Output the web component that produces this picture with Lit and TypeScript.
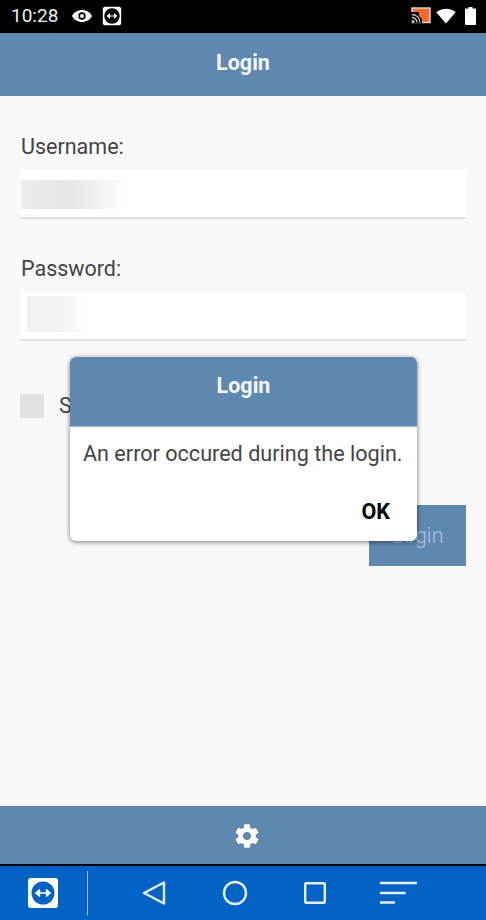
import { LitElement, html, css, svg } from 'lit';
import { customElement } from 'lit/decorators.js';

const tvMark = (bg: string, fg: string) => svg`
  <circle cx="12" cy="12" r="9.2" fill=${bg}></circle>
  <path d="M6.2 12h11.6M6.2 12l3-2.6v5.2zM17.8 12l-3-2.6v5.2z" fill=${fg} stroke=${fg} stroke-width="1.1" stroke-linejoin="round"></path>
`;

@customElement('app-root')
export class AppRoot extends LitElement {
  static styles = css`
    :host {
      display: block;
      width: 486px;
      height: 920px;
      overflow: hidden;
      font-family: Roboto, 'Liberation Sans', sans-serif;
      color: #444;
    }

    .screen {
      position: relative;
      display: flex;
      flex-direction: column;
      height: 920px;
      background: #f9f9f9;
    }

    .status {
      flex: 0 0 33px;
      display: flex;
      align-items: center;
      justify-content: space-between;
      box-sizing: border-box;
      padding: 0 10px 2px 11px;
      background: #000;
      color: #eee;
      font-size: 19px;
    }
    .status-left, .status-right { display: flex; align-items: center; }
    .status-left .time { margin-right: 13px; }
    .status-left .eye { margin-right: 9px; }
    .status-right .wifi { margin: 0 9px 0 5px; }
    .status svg { display: block; }

    .bar {
      display: flex;
      align-items: center;
      justify-content: center;
      background: #5f88b1;
      color: #f4f6f9;
      font-size: 21.5px;
      font-weight: 700;
    }
    .top { flex: 0 0 63px; padding-bottom: 4px; box-sizing: border-box; }

    .form {
      flex: 1;
      display: flex;
      flex-direction: column;
      padding: 37px 20px 0;
    }
    label {
      padding-left: 1px;
      font-size: 21.5px;
      line-height: 28px;
      color: #444;
    }
    .field {
      box-sizing: border-box;
      height: 49px;
      margin: 9px 0 36px;
      background: #fff;
      border-bottom: 2px solid #e2e2e2;
    }
    .blur-user {
      width: 107px;
      height: 29px;
      margin: 10px 0 0 1px;
      background: linear-gradient(90deg, #ececec 0%, #e6e6e6 45%, #ffffff 100%);
    }
    .blur-pass {
      width: 60px;
      height: 36px;
      margin: 4px 0 0 7px;
      background: linear-gradient(90deg, #f1f1f1 0%, #f4f4f4 60%, #ffffff 100%);
    }
    .remember {
      display: flex;
      align-items: center;
      gap: 15px;
      margin-top: 17px;
      font-size: 21.5px;
      line-height: 24px;
    }
    .box {
      width: 24px;
      height: 24px;
      background: #e2e2e2;
    }
    .submit {
      align-self: flex-end;
      box-sizing: border-box;
      width: 97px;
      height: 61px;
      margin-top: 87px;
      display: flex;
      align-items: center;
      justify-content: center;
      background: #5f88b1;
      color: #a9c0d8;
      font-size: 21.5px;
      font-weight: 300;
    }

    .dialog {
      position: absolute;
      left: 70px;
      top: 357px;
      width: 347px;
      height: 184px;
      background: #fff;
      border-radius: 6px;
      box-shadow: 0 1px 5px rgba(0, 0, 0, 0.55);
      overflow: hidden;
      display: flex;
      flex-direction: column;
    }
    .dialog .head {
      flex: 0 0 70px;
      box-sizing: border-box;
      padding-bottom: 12px;
      border-bottom: 1px solid #9db6d0;
    }
    .dialog p {
      margin: 14px 0 0 13px;
      font-size: 21.6px;
      line-height: 26px;
      color: #444;
      white-space: nowrap;
    }
    .dialog .ok {
      align-self: flex-end;
      margin: 32px 27px 0 0;
      font-size: 21.5px;
      line-height: 26px;
      font-weight: 700;
      color: #000;
    }

    .bottom { flex: 0 0 58px; padding: 2px 0 0 8px; box-sizing: border-box; }
    .rule { flex: 0 0 2px; background: #000; }

    .nav {
      flex: 0 0 54px;
      display: flex;
      align-items: center;
      background: #0363c4;
    }
    .nav svg { display: block; flex: none; }
    .tv { margin-left: 28px; }
    .divider {
      width: 1px;
      height: 44px;
      margin: 0 54px 0 29px;
      background: #9fc3ea;
    }
    .nav .back { margin-right: 56px; }
    .nav .home { margin-right: 56px; }
    .nav .recent { margin-right: 53px; }
  `;

  render() {
    return html`
      <div class="screen">
        <div class="status">
          <div class="status-left">
            <span class="time">10:28</span>
            <svg class="eye" width="22" height="16" viewBox="0 0 22 16">
              <path fill-rule="evenodd" fill="#fff" d="M11 2C6.5 2 2.7 4.500 1 8c1.700 3.500 5.500 6 10 6s8.300-2.500 10-6c-1.700-3.500-5.500-6-10-6zm0 2.300a3.700 3.700 0 1 1 0 7.400 3.700 3.700 0 0 1 0-7.400zm0 1.700a2 2 0 1 0 0 4 2 2 0 0 0 0-4z"></path>
            </svg>
            <svg width="20" height="20" viewBox="0 0 24 24">
              <rect x="1" y="1" width="22" height="22" rx="3" fill="#fff"></rect>
              ${tvMark('#000', '#fff')}
            </svg>
          </div>
          <div class="status-right">
            <svg width="20" height="17" viewBox="0 0 20 17">
              <rect x="1" y="1" width="18" height="14.500" fill="#ff6a2b" stroke="#ddd" stroke-width="1.400"></rect>
              <path d="M0 5h8v4l3 3v4H0z" fill="#000"></path>
              <path d="M1 7.500a8 8 0 0 1 8 8M1 10.500a5 5 0 0 1 5 5" fill="none" stroke="#ccc" stroke-width="1.300"></path>
              <circle cx="2" cy="14.500" r="1.500" fill="#ccc"></circle>
            </svg>
            <svg class="wifi" width="20" height="16" viewBox="0 0 20 16">
              <path fill="#fff" d="M10 15.500L.3 4.200C3 2 6.300.7 10 .7s7 1.300 9.700 3.500z"></path>
            </svg>
            <svg width="11" height="18" viewBox="0 0 11 18">
              <path fill="#fff" d="M3.500 0h4v1.500H10a1 1 0 0 1 1 1V17a1 1 0 0 1-1 1H1a1 1 0 0 1-1-1V2.500a1 1 0 0 1 1-1h2.500z"></path>
            </svg>
          </div>
        </div>

        <div class="bar top">Login</div>

        <div class="form">
          <label>Username:</label>
          <div class="field"><div class="blur-user"></div></div>
          <label>Password:</label>
          <div class="field"><div class="blur-pass"></div></div>
          <div class="remember"><span class="box"></span><span>Save login</span></div>
          <div class="submit">Login</div>
        </div>

        <div class="bar bottom">
          <svg width="28" height="28" viewBox="0 0 24 24">
            <path fill="#fff" d="M19.430 12.980c.040-.320.070-.640.070-.980s-.030-.660-.070-.980l2.110-1.650c.190-.150.240-.420.120-.640l-2-3.460c-.120-.220-.390-.300-.610-.220l-2.490 1c-.520-.400-1.080-.730-1.690-.980l-.380-2.650A.488.488 0 0 0 14 2h-4c-.250 0-.460.180-.490.420l-.380 2.650c-.610.250-1.170.590-1.690.980l-2.490-1c-.230-.090-.490 0-.610.220l-2 3.460c-.130.220-.070.490.120.640l2.110 1.650c-.040.320-.070.650-.070.980s.030.660.070.980l-2.110 1.650c-.190.150-.240.420-.120.640l2 3.460c.120.220.390.300.610.220l2.490-1c.520.400 1.080.730 1.690.980l.380 2.650c.030.240.240.420.490.420h4c.250 0 .460-.180.490-.420l.380-2.650c.610-.250 1.170-.590 1.690-.980l2.490 1c.230.090.490 0 .610-.220l2-3.460c.120-.220.070-.490-.120-.640l-2.110-1.650zM12 15.500c-1.930 0-3.500-1.570-3.500-3.500s1.570-3.500 3.500-3.500 3.500 1.570 3.500 3.500-1.570 3.500-3.500 3.500z"></path>
          </svg>
        </div>
        <div class="rule"></div>

        <div class="nav">
          <svg class="tv" width="30" height="30" viewBox="0 0 24 24">
            <rect x="0" y="0" width="24" height="24" rx="2.500" fill="#fff"></rect>
            ${tvMark('#0363c4', '#fff')}
          </svg>
          <div class="divider"></div>
          <svg class="back" width="24" height="26" viewBox="0 0 24 26">
            <path d="M22 2.500v21L2 13z" fill="none" stroke="#e4eefa" stroke-width="2.400" stroke-linejoin="round"></path>
          </svg>
          <svg class="home" width="26" height="26" viewBox="0 0 26 26">
            <circle cx="13" cy="13" r="11" fill="none" stroke="#e4eefa" stroke-width="2.400"></circle>
          </svg>
          <svg class="recent" width="22" height="22" viewBox="0 0 22 22">
            <rect x="1.200" y="1.200" width="19.600" height="19.600" rx="1" fill="none" stroke="#e4eefa" stroke-width="2.400"></rect>
          </svg>
          <svg width="38" height="24" viewBox="0 0 38 24">
            <path d="M2 2h35M2 12h23.500M2 21.500h13" fill="none" stroke="#e4eefa" stroke-width="2.600" stroke-linecap="round"></path>
          </svg>
        </div>

        <div class="dialog">
          <div class="bar head">Login</div>
          <p>An error occured during the login.</p>
          <div class="ok">OK</div>
        </div>
      </div>
    `;
  }
}
